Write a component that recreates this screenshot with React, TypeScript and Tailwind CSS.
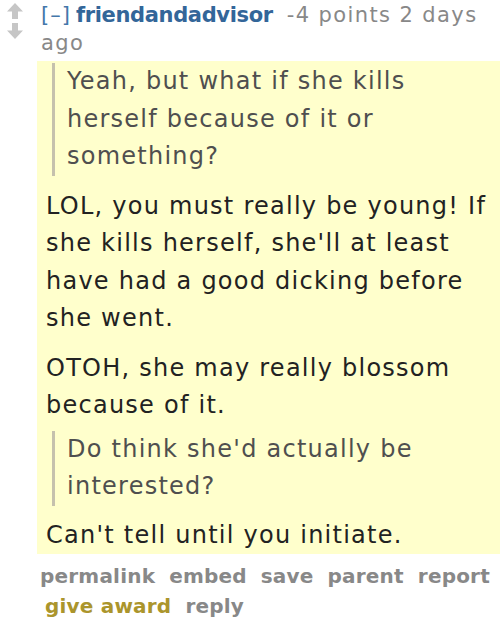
import React from "react";

const font = { fontFamily: '"DejaVu Sans", Verdana, sans-serif' };

function Arrow({ down }: { down?: boolean }) {
    return (
        <svg width="16" height="16" viewBox="0 0 16 16" className={down ? "rotate-180" : ""}>
            <path d="M8 0 L16 8.5 L11 8.5 L11 16 L5 16 L5 8.5 L0 8.5 Z" fill="#c6c6c6" />
        </svg>
    );
}

export default function App() {
    return (
        <div className="flex bg-white w-[500px] h-[625px] overflow-hidden text-[#222]" style={font}>
            <div className="flex flex-col items-center w-[37px] pt-[3px] pr-[7px] gap-[4px]">
                <Arrow />
                <Arrow down />
            </div>
            <div className="flex-1 min-w-0">
                <div className="text-[21px] leading-[28px] pl-[4px] pt-[1px] text-[#888] tracking-[1.4px]">
                    <div className="flex whitespace-nowrap">
                        <span className="text-[#4477aa] tracking-[1px] mr-[5px]">[–]</span>
                        <span className="font-bold tracking-[-0.35px] text-[#336699]">friendandadvisor</span>
                        <span className="ml-[14px]">-4 points 2 days</span>
                    </div>
                    <div>ago</div>
                </div>
                <div className="bg-[#ffffcc] mt-[4px] pt-[2px] pl-[9px] pr-[4px] text-[24px] leading-[37.5px] tracking-[1.25px]">
                    <blockquote className="border-l-[3px] border-[#c5c1ad] ml-[6px] pl-[12px] text-[#4f4f4f]">
                        <p>Yeah, but what if she kills herself because of it or something?</p>
                    </blockquote>
                    <p className="mt-[12px]">
                        LOL, you must really be young! If she kills herself, she'll at least have had a good dicking before she went.
                    </p>
                    <p className="mt-[12px]">OTOH, she may really blossom because of it.</p>
                    <blockquote className="border-l-[3px] border-[#c5c1ad] ml-[6px] pl-[12px] text-[#4f4f4f] mt-[6px]">
                        <p>Do think she'd actually be interested?</p>
                    </blockquote>
                    <p className="mt-[11px]">Can't tell until you initiate.</p>
                </div>
                <ul className="flex flex-wrap gap-x-[14px] pl-[3px] pt-[7px] text-[20px] leading-[30px] font-bold tracking-[0.2px] text-[#888]">
                    <li>permalink</li>
                    <li>embed</li>
                    <li>save</li>
                    <li>parent</li>
                    <li>report</li>
                    <li className="text-[#ab952c] pl-[5px]">give award</li>
                    <li>reply</li>
                </ul>
            </div>
        </div>
    );
}
